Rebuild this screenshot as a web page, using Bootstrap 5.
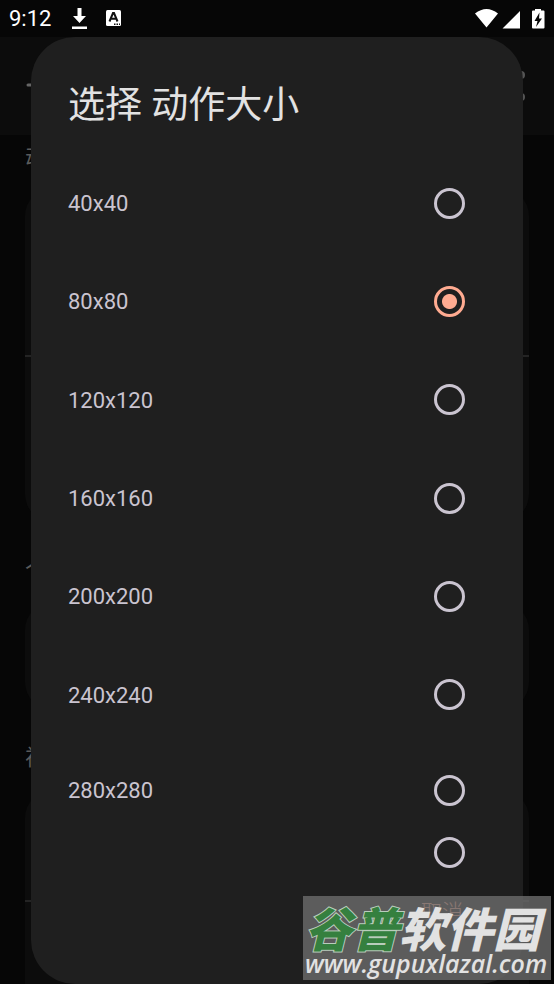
<!DOCTYPE html>
<html lang="zh-CN" data-bs-theme="dark">
<head>
<meta charset="utf-8">
<meta name="viewport" content="width=device-width, initial-scale=1">
<title>选择 动作大小</title>
<link href="https://cdn.jsdelivr.net/npm/bootstrap@5.3.0/dist/css/bootstrap.min.css" rel="stylesheet">
<style>
body { background: #060606; font-family: Roboto, "Noto Sans CJK SC", sans-serif; }
.screen { min-height: 100vh; }
.status { height: 37px; padding: 0 9px; color: #fff; font-size: 22px; line-height: 37px; }
.under { top: 37px; color: #5a5a5a; font-size: 22px; line-height: 32px; }
.appbar { height: 98px; background: #0c0c0c; padding: 0 20px; }
.group-title { margin: 0 25px; padding-top: 7px; height: 53px; }
.group { margin: 0 25px; background: #0c0c0c; border-radius: 28px; }
.group hr { margin: 0; border-top: 2px solid #242424; opacity: 1; }
.group-a { height: 334px; padding-top: 167px; }
.group-b { height: 108px; }
.group-c { height: 240px; padding-top: 110px; border-radius: 28px 28px 0 0; }
.gap-label { padding-top: 32px; height: 80px; margin: 0 25px; }
.dialog { margin: 0 31px; background: #1f1f1f; border-radius: 44px; padding: 37px 37px 0; }
.dialog h1 { font-size: 37px; line-height: 64px; color: #e2e2e2; margin: 0 0 16px; }
.sizes { height: 590px; }
.size-row { color: #cac4d0; font-size: 22px; line-height: 32px; padding-right: 21px; }
.size-row span { padding-top: 2px; }
.size-row.tight { height: 92px; }
.size-row.cut { height: 32px; }
.dialog input[type=radio] { appearance: none; width: 31px; height: 31px; margin: 0; border: 3px solid #cac4d0; border-radius: 50%; background: transparent; }
.dialog input[type=radio]:checked { border-color: #ffab91; background: radial-gradient(circle, #ffab91 7px, transparent 8px); }
.cancel { margin: 28px 23px 0 0; color: #ffab91; font-size: 21px; line-height: 32px; font-weight: 300; background: none; border: 0; padding: 0; }
.stamp { right: 3px; bottom: 4px; width: 248px; height: 84px; background: rgba(108,108,108,.8); color: #e2e2e2; white-space: nowrap; }
.stamp-name { font: italic 900 47px/54px "Noto Sans CJK SC", sans-serif; padding: 4px 0 0 2px; }
.stamp-name span { color: #35803f; -webkit-text-stroke: 2px #b9cdbc; paint-order: stroke fill; }
.stamp-url { font: italic 600 25px/26px "Open Sans", "Noto Sans", sans-serif; padding-left: 2px; margin-top: -4px; }
</style>
<script src="https://cdn.jsdelivr.net/npm/bootstrap@5.3.0/dist/js/bootstrap.bundle.min.js"></script>
</head>
<body>
<div class="screen position-relative overflow-hidden d-flex flex-column">
  <div class="under position-absolute start-0 end-0 bottom-0 overflow-hidden" aria-hidden="true">
    <div class="appbar d-flex align-items-center justify-content-between">
      <svg width="30" height="30" viewBox="0 0 30 30" fill="none" stroke="#666" stroke-width="3" stroke-linecap="round"><path d="M8 14H27M17 4L27 14L17 24"/></svg>
      <svg width="18" height="30" viewBox="0 0 18 30" fill="#555"><circle cx="5" cy="4" r="4"/><circle cx="5" cy="26" r="4"/></svg>
    </div>
    <div class="group-title">动作</div>
    <div class="group group-a"><hr></div>
    <div class="gap-label">个性化</div>
    <div class="group group-b"></div>
    <div class="gap-label">视图</div>
    <div class="group group-c"><hr></div>
  </div>

  <header class="status d-flex align-items-center justify-content-between position-relative">
    <div class="d-flex align-items-center">
      <span>9:12</span>
      <svg class="ms-3" width="25" height="24" viewBox="0 0 25 24" fill="#fff"><path d="M10.500 1h4v8h4.500L12.500 16 6 9h4.500zM5 19.500h15V22H5z"/></svg>
      <svg class="ms-2" width="24" height="24" viewBox="0 0 24 24"><rect x="6" y="3" width="15" height="16" rx="1.500" fill="#fff"/><path d="M9.500 14.500L13 6h1l3.500 8.500M10.800 11.800h5.400" fill="none" stroke="#111" stroke-width="2"/><path d="M14 16.500h1.500V18H14zM16.500 16.500H18V18h-1.500zM19 16.500h1V18h-1z" fill="#111"/></svg>
    </div>
    <svg width="72" height="24" viewBox="0 0 72 24" fill="#fff"><path d="M2 6.500Q13.500-2.500 25 6.500L13.500 20.500zM29.500 21.500L47 4v17.500zM62 3.500V2h6v1.500h2.500q1 0 1 1v16q0 1-1 1H60q-1 0-1-1v-16q0-1 1-1z"/><path d="M66.500 5.500L61.500 14h3L63 20l6-8.500h-3z" fill="#080808"/></svg>
  </header>

  <main class="dialog position-relative flex-grow-1" role="dialog" aria-labelledby="title">
    <h1 id="title" class="fw-normal">选择 动作大小</h1>
    <form>
      <div class="sizes d-flex flex-column">
        <label class="size-row flex-fill d-flex align-items-center justify-content-between"><span>40x40</span><input type="radio" name="size"></label>
        <label class="size-row flex-fill d-flex align-items-center justify-content-between"><span>80x80</span><input type="radio" name="size" checked></label>
        <label class="size-row flex-fill d-flex align-items-center justify-content-between"><span>120x120</span><input type="radio" name="size"></label>
        <label class="size-row flex-fill d-flex align-items-center justify-content-between"><span>160x160</span><input type="radio" name="size"></label>
        <label class="size-row flex-fill d-flex align-items-center justify-content-between"><span>200x200</span><input type="radio" name="size"></label>
        <label class="size-row flex-fill d-flex align-items-center justify-content-between"><span>240x240</span><input type="radio" name="size"></label>
      </div>
      <label class="size-row tight d-flex align-items-center justify-content-between"><span>280x280</span><input type="radio" name="size"></label>
      <div class="size-row cut d-flex align-items-center justify-content-end"><input type="radio" name="size" aria-label="320x320"></div>
      <div class="d-flex justify-content-end"><button type="button" class="cancel">取消</button></div>
    </form>
  </main>

  <div class="stamp position-absolute">
    <div class="stamp-name"><span>谷普</span>软件园</div>
    <div class="stamp-url">www.gupuxlazal.com</div>
  </div>
</div>
</body>
</html>
